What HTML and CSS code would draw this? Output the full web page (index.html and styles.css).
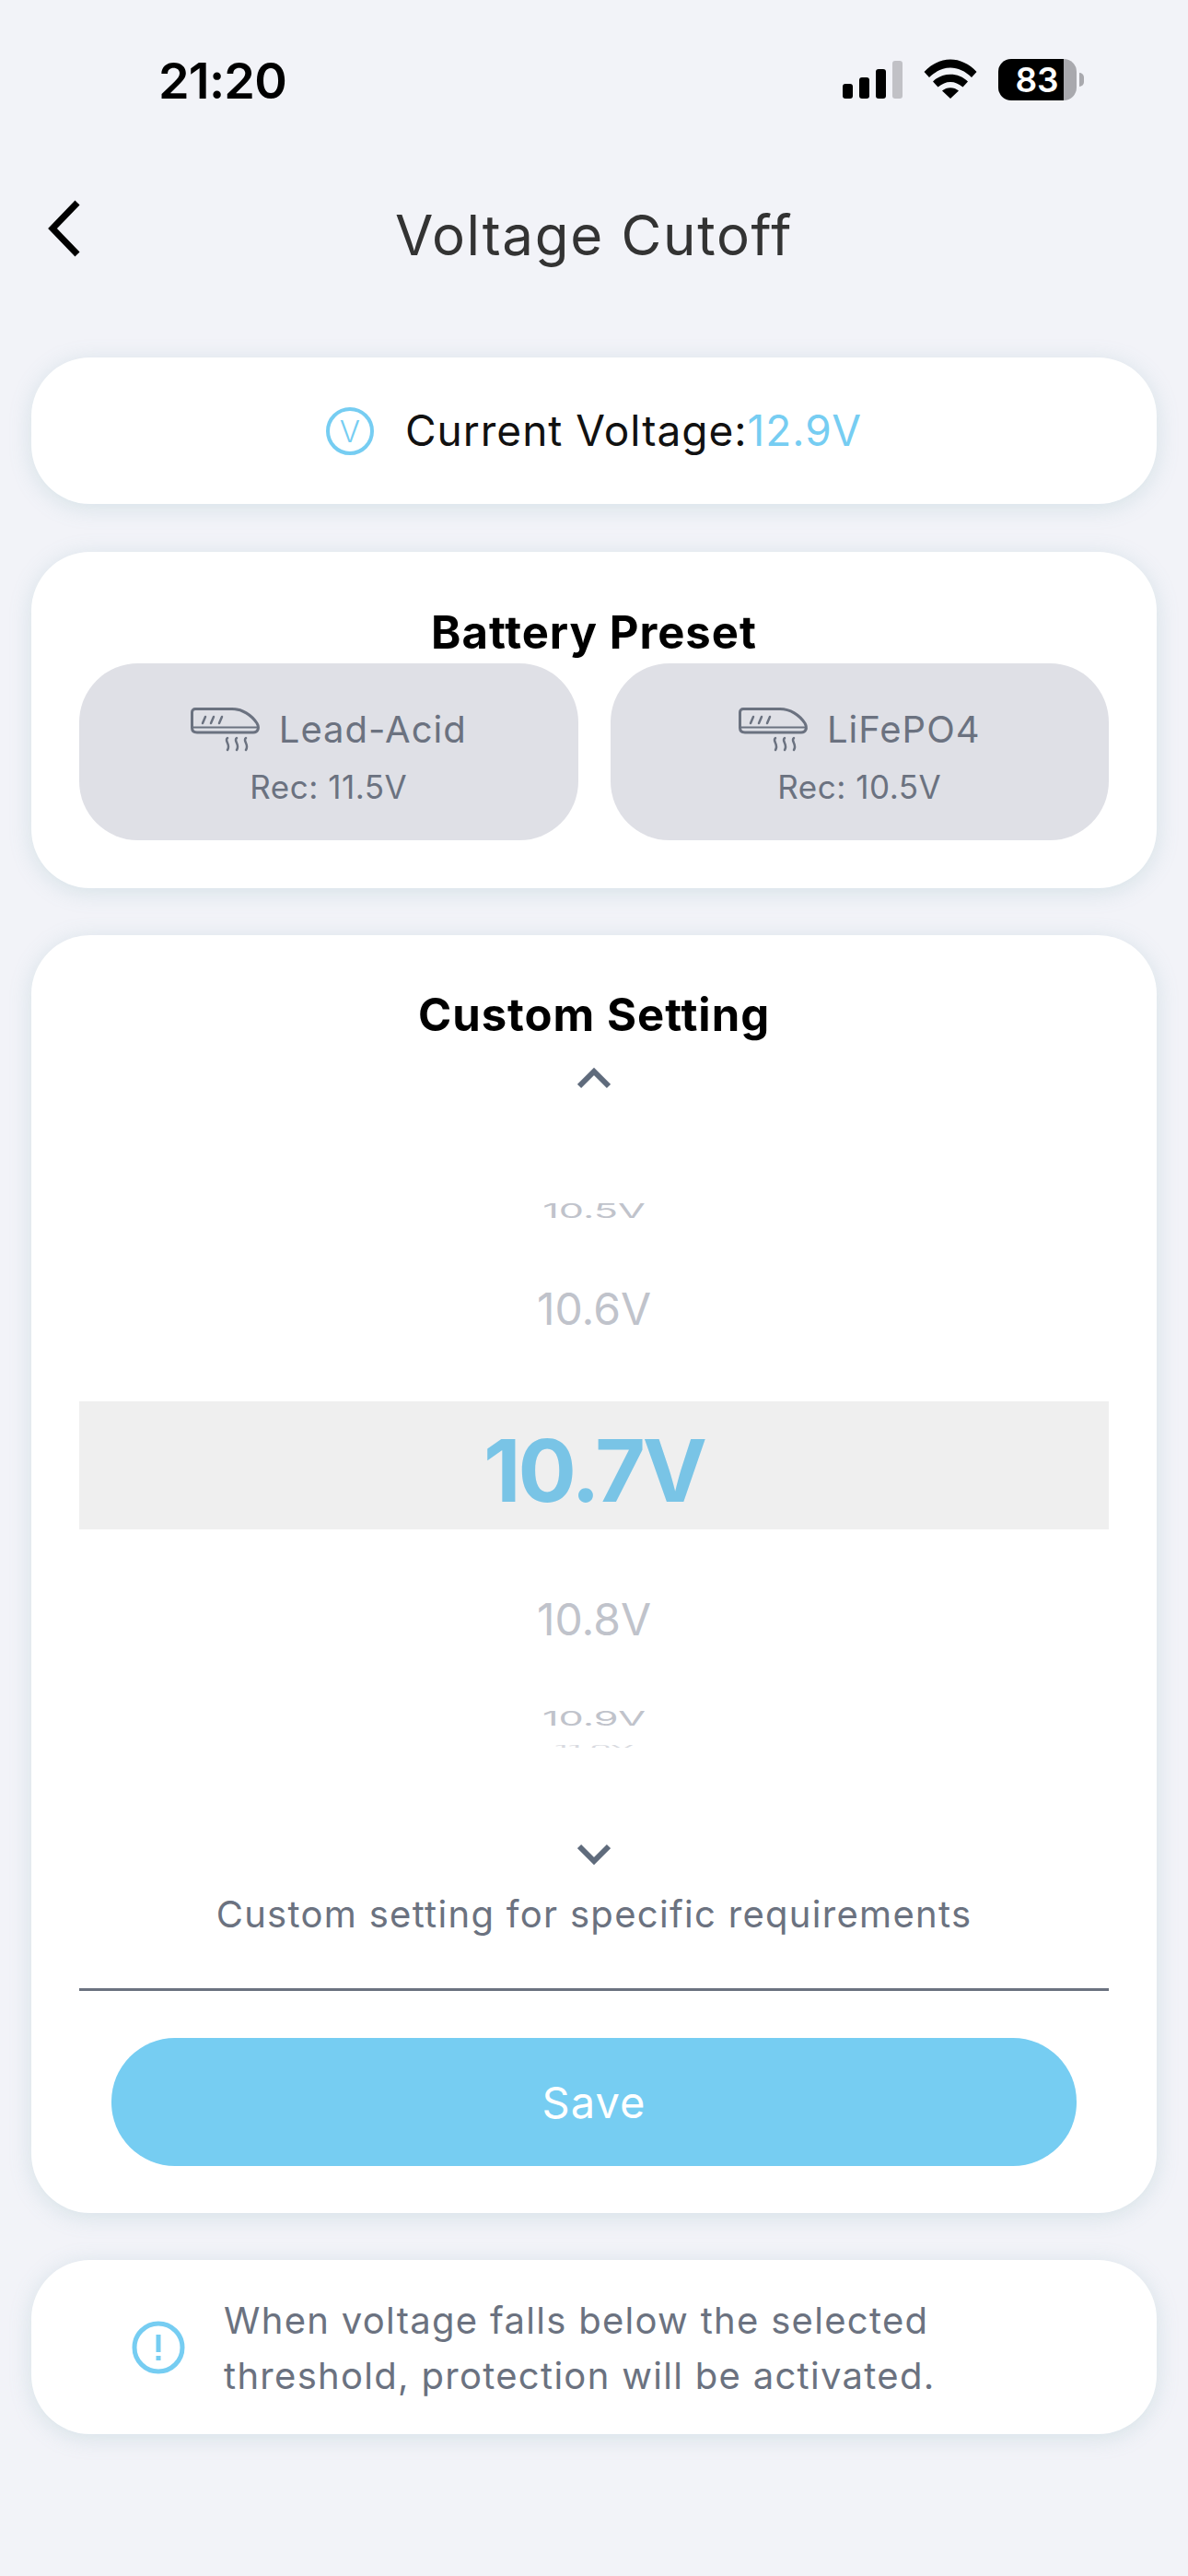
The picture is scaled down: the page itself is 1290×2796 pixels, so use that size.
FILE: index.html
```html
<!DOCTYPE html>
<html lang="en">
<head>
    <meta charset="UTF-8">
    <meta name="viewport" content="width=device-width, initial-scale=1.0">
    <title>Voltage Cutoff</title>
    <link rel="stylesheet" href="styles.css">
</head>
<body>
    <div class="status-bar">
        <span class="status-time">21:20</span>
        <div class="status-icons">
            <div class="signal">
                <span class="signal-bar bar-1"></span>
                <span class="signal-bar bar-2"></span>
                <span class="signal-bar bar-3"></span>
                <span class="signal-bar bar-4"></span>
            </div>
            <svg class="wifi" width="58" height="43" viewBox="0 0 58 43">
                <path d="M0.5 14 C17 -4 41 -4 57.5 14 L52 20 C38 6 20 6 6 20 Z" fill="#000"/>
                <path d="M10 24.5 C20 14 38 14 48 24.5 L42.5 30.5 C34 23 24 23 15.5 30.5 Z" fill="#000"/>
                <path d="M20 34.5 C25 30 33 30 38 34.5 L29 43 Z" fill="#000"/>
            </svg>
            <div class="battery">
                <div class="battery-body">
                    <span class="battery-level">83</span>
                </div>
                <span class="battery-nub"></span>
            </div>
        </div>
    </div>

    <header class="page-header">
        <svg class="back-icon" width="36" height="62" viewBox="0 0 36 62">
            <path d="M33 3 L6 31 L33 59" fill="none" stroke="#000" stroke-width="7"/>
        </svg>
        <h1>Voltage Cutoff</h1>
    </header>

    <main class="cards">
        <section class="card current-card">
            <span class="volt-icon">V</span>
            <span class="current-label">Current Voltage:<span class="current-value">12.9V</span></span>
        </section>

        <section class="card preset-card">
            <h2>Battery Preset</h2>
            <div class="preset-grid">
                <div class="preset-button">
                    <div class="preset-name">
                        <svg class="preset-icon" width="76" height="48" viewBox="0 0 76 48">
                            <path d="M5 1.5 H45 C56 1.5 66 8 72 17 C75 22 73 27 68 27 H7 C3.5 27 1.5 25 1.5 22 V5 C1.5 3 3 1.5 5 1.5 Z" fill="none" stroke="#6b7280" stroke-width="3"/>
                            <path d="M2 21.5 H73" stroke="#6b7280" stroke-width="2"/>
                            <path d="M13 17 L16 10 M22 17 L25 10 M31 17 L34 10" stroke="#6b7280" stroke-width="2.5" stroke-linecap="round"/>
                            <path d="M40 33 C36 36 44 40 40 46 M50 33 C46 36 54 40 50 46 M60 33 C56 36 64 40 60 46" fill="none" stroke="#6b7280" stroke-width="2.5" stroke-linecap="round"/>
                        </svg>
                        <span>Lead-Acid</span>
                    </div>
                    <p class="preset-rec">Rec: 11.5V</p>
                </div>
                <div class="preset-button">
                    <div class="preset-name">
                        <svg class="preset-icon" width="76" height="48" viewBox="0 0 76 48">
                            <path d="M5 1.5 H45 C56 1.5 66 8 72 17 C75 22 73 27 68 27 H7 C3.5 27 1.5 25 1.5 22 V5 C1.5 3 3 1.5 5 1.5 Z" fill="none" stroke="#6b7280" stroke-width="3"/>
                            <path d="M2 21.5 H73" stroke="#6b7280" stroke-width="2"/>
                            <path d="M13 17 L16 10 M22 17 L25 10 M31 17 L34 10" stroke="#6b7280" stroke-width="2.5" stroke-linecap="round"/>
                            <path d="M40 33 C36 36 44 40 40 46 M50 33 C46 36 54 40 50 46 M60 33 C56 36 64 40 60 46" fill="none" stroke="#6b7280" stroke-width="2.5" stroke-linecap="round"/>
                        </svg>
                        <span>LiFePO4</span>
                    </div>
                    <p class="preset-rec">Rec: 10.5V</p>
                </div>
            </div>
        </section>

        <section class="card custom-card">
            <h2>Custom Setting</h2>
            <svg class="chevron chevron-up" width="36" height="24" viewBox="0 0 36 24">
                <path d="M2 21 L18 5 L34 21" fill="none" stroke="#5f6b7c" stroke-width="6"/>
            </svg>
            <div class="wheel">
                <div class="wheel-item wheel-far">10.5V</div>
                <div class="wheel-item wheel-near">10.6V</div>
                <div class="wheel-selected">10.7V</div>
                <div class="wheel-item wheel-near wheel-near-low">10.8V</div>
                <div class="wheel-item wheel-far wheel-far-low">10.9V</div>
                <div class="wheel-item wheel-edge">11.0V</div>
            </div>
            <svg class="chevron chevron-down" width="36" height="24" viewBox="0 0 36 24">
                <path d="M2 3 L18 19 L34 3" fill="none" stroke="#5f6b7c" stroke-width="6"/>
            </svg>
            <p class="custom-hint">Custom setting for specific requirements</p>
            <button class="save-button">Save</button>
        </section>

        <section class="card notice-card">
            <svg class="notice-icon" width="58" height="58" viewBox="0 0 58 58">
                <circle cx="29" cy="29" r="26" fill="none" stroke="#76cdf2" stroke-width="5"/>
                <rect x="26.5" y="15" width="5" height="19" fill="#76cdf2"/>
                <rect x="26.5" y="38" width="5" height="5" fill="#76cdf2"/>
            </svg>
            <p>When voltage falls below the selected threshold, protection will be activated.</p>
        </section>
    </main>
</body>
</html>
```

FILE: styles.css
```css
* {
    margin: 0;
    padding: 0;
    box-sizing: border-box;
    font-family: Inter, "Liberation Sans", sans-serif;
}

body {
    background-color: #f2f3f8;
    width: 1290px;
    height: 2796px;
    overflow: hidden;
}

.status-bar {
    height: 175px;
    padding: 60px 113px 0 172px;
    display: flex;
    justify-content: space-between;
    align-items: flex-start;
}

.status-time {
    font-size: 54px;
    line-height: 56px;
    font-weight: 600;
    color: #000;
    letter-spacing: -0.8px;
}

.status-icons {
    display: flex;
    align-items: flex-end;
    gap: 23px;
    height: 49px;
}

.signal {
    display: flex;
    align-items: flex-end;
    gap: 7px;
    margin-bottom: 2px;
}

.signal-bar {
    display: block;
    width: 11px;
    border-radius: 3px;
    background: #000;
}

.bar-1 { height: 16px; }
.bar-2 { height: 23px; }
.bar-3 { height: 32px; }
.bar-4 { height: 41px; background: #c1c1c6; }

.wifi {
    margin-bottom: 2px;
}

.battery {
    display: flex;
    align-items: center;
    gap: 3px;
}

.battery-body {
    width: 85px;
    height: 45px;
    border-radius: 14px;
    background: linear-gradient(to right, #000 71px, #a9a9ae 71px);
    padding-left: 15px;
}

.battery-level {
    display: block;
    width: 54px;
    text-align: center;
    color: #fff;
    font-size: 37px;
    line-height: 45px;
    font-weight: 600;
}

.battery-nub {
    width: 5px;
    height: 15px;
    background: #a9a9ae;
    border-radius: 0 5px 5px 0;
}

.page-header {
    position: relative;
    height: 213px;
    display: flex;
    justify-content: center;
    padding-top: 44px;
}

.back-icon {
    position: absolute;
    left: 51px;
    top: 42px;
}

.page-header h1 {
    font-size: 60px;
    line-height: 72px;
    font-weight: 400;
    color: #333;
    letter-spacing: 1.7px;
}

.cards {
    display: flex;
    flex-direction: column;
    gap: 51px;
    padding: 0 34px;
}

.card {
    background: #fff;
    border-radius: 64px;
    box-shadow: 0 4px 24px rgba(115, 165, 175, 0.22);
}

.card h2 {
    font-size: 49px;
    line-height: 66px;
    font-weight: 700;
    color: #000;
    text-align: center;
    letter-spacing: 1px;
}

.current-card {
    height: 159px;
    margin-bottom: 1px;
    display: flex;
    justify-content: center;
    align-items: center;
}

.volt-icon {
    width: 52px;
    height: 52px;
    margin-right: 34px;
    border: 4px solid #76cdf2;
    border-radius: 50%;
    color: #76cdf2;
    font-size: 33px;
    font-weight: 300;
    line-height: 44px;
    text-align: center;
}

.current-label {
    font-size: 46px;
    line-height: 56px;
    margin-top: -2px;
    color: #111;
    letter-spacing: 1px;
}

.current-value {
    color: #76cdf2;
}

.preset-card {
    height: 365px;
    padding: 55px 52px 0;
}

.preset-grid {
    display: grid;
    grid-template-columns: 1fr 1fr;
    gap: 35px;
}

.preset-button {
    height: 192px;
    background: #dfe0e6;
    border-radius: 64px;
    display: flex;
    flex-direction: column;
    align-items: center;
    padding-top: 48px;
    color: #6b7280;
}

.preset-name {
    display: flex;
    align-items: flex-start;
    gap: 20px;
    font-size: 40px;
    line-height: 48px;
    letter-spacing: 1px;
}

.preset-rec {
    margin-top: 18px;
    font-size: 35px;
    line-height: 40px;
    letter-spacing: 0.5px;
}

.custom-card {
    height: 1387px;
    padding: 54px 52px 0;
    display: flex;
    flex-direction: column;
    align-items: center;
}

.chevron-up {
    margin-top: 23px;
}

.wheel {
    width: 100%;
    height: 698px;
    margin-top: 17px;
    padding-top: 85px;
    overflow: hidden;
    display: flex;
    flex-direction: column;
    align-items: center;
}

.wheel-item {
    flex: none;
    width: 100%;
    text-align: center;
    font-size: 48px;
    color: #c0c3cb;
}

.wheel-near {
    height: 100px;
    line-height: 100px;
    margin-top: 27px;
    margin-bottom: 50px;
}

.wheel-near-low {
    margin-top: 48px;
    margin-bottom: 0;
}

.wheel-far {
    height: 60px;
    line-height: 60px;
    transform: scale(0.9, 0.46);
}

.wheel-far-low {
    margin-top: 27px;
}

.wheel-edge {
    height: 20px;
    margin-top: 0;
    line-height: 20px;
    color: #d8dae0;
    transform: scale(0.75, 0.14);
    transform-origin: top center;
}

.wheel-selected {
    flex: none;
    width: 100%;
    height: 139px;
    line-height: 151px;
    background: #efefef;
    text-align: center;
    font-size: 94px;
    font-weight: 700;
    letter-spacing: -3px;
    color: #79c4e6;
}

.chevron-down {
    margin-top: 104px;
}

.custom-hint {
    margin-top: 25px;
    width: 100%;
    padding-bottom: 52px;
    border-bottom: 3px solid #6b7280;
    text-align: center;
    font-size: 40px;
    line-height: 56px;
    color: #6b7280;
    letter-spacing: 1.3px;
}

.save-button {
    width: 1048px;
    height: 139px;
    margin-top: 51px;
    border: none;
    border-radius: 69px;
    background-color: #76cdf2;
    color: #fff;
    font-size: 47px;
    letter-spacing: 1px;
}

.notice-card {
    height: 189px;
    display: flex;
    align-items: center;
    padding-left: 109px;
    gap: 42px;
}

.notice-card p {
    width: 820px;
    padding-top: 2px;
    font-size: 40px;
    line-height: 60px;
    color: #6b7280;
    letter-spacing: 1.3px;
}
```
